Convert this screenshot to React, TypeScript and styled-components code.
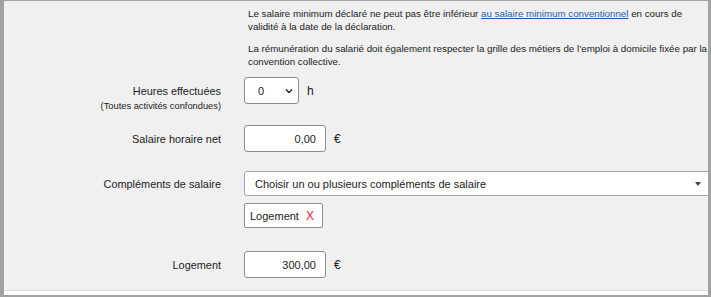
import styled, { createGlobalStyle } from 'styled-components';

const GlobalStyle = createGlobalStyle`
  html, body {
    margin: 0;
    padding: 0;
    background: #ffffff;
  }
  body {
    font-family: "Liberation Sans", Arial, sans-serif;
    color: #222222;
  }
`;

const Frame = styled.div`
  width: 711px;
  height: 297px;
  box-sizing: border-box;
  border-style: solid;
  border-color: #a2a2a2;
  border-width: 1px 3px 2px 4px;
  background: #ffffff;
  overflow: hidden;
`;

const Panel = styled.div`
  height: 290px;
  box-sizing: border-box;
  background: #f0f0f0;
  border-bottom: 1px solid #dadada;
  padding-top: 6px;
  overflow: hidden;
`;

const Row = styled.div<{ top?: number; align?: string }>`
  display: grid;
  grid-template-columns: 217px 1fr;
  column-gap: 23px;
  align-items: ${p => p.align || 'center'};
  margin-top: ${p => p.top || 0}px;
`;

const Notice = styled.div`
  padding-left: 4px;
  font-size: 9.75px;
  line-height: 13.3px;
  color: #222222;

  p {
    margin: 0 0 8px 0;
  }
  p:last-child {
    margin-bottom: 0;
  }
  a {
    color: #1f5fa6;
    text-decoration: underline;
  }
`;

const Label = styled.div<{ pad?: number }>`
  text-align: right;
  font-size: 10.9px;
  line-height: 14px;
  color: #222222;
  padding-top: ${p => p.pad || 0}px;
`;

const SubLabel = styled.div`
  font-size: 9.3px;
  line-height: 12px;
  margin-top: 2px;
`;

const Field = styled.div`
  display: flex;
  align-items: center;
  gap: 8px;
`;

const Unit = styled.span`
  font-size: 12px;
  color: #222222;
`;

const SmallSelect = styled.div`
  width: 55px;
  height: 27px;
  box-sizing: border-box;
  border: 1px solid #8e8e8e;
  border-radius: 3px;
  background: #ffffff;
  display: flex;
  align-items: center;
  justify-content: space-between;
  padding: 0 5px 0 13px;
  font-size: 11px;
`;

const AmountInput = styled.div`
  width: 82px;
  height: 27px;
  box-sizing: border-box;
  border: 1px solid #8e8e8e;
  border-radius: 3px;
  background: #ffffff;
  display: flex;
  align-items: center;
  justify-content: flex-end;
  padding-right: 9px;
  font-size: 11px;
`;

const WideSelect = styled.div`
  width: calc(100% + 14px);
  flex-shrink: 0;
  height: 25px;
  box-sizing: border-box;
  border: 1px solid #a8a8a8;
  border-radius: 3px;
  background: #ffffff;
  display: flex;
  align-items: center;
  justify-content: space-between;
  padding: 0 20px 0 10px;
  font-size: 11px;
`;

const Caret = styled.span`
  width: 0;
  height: 0;
  border-left: 3px solid transparent;
  border-right: 3px solid transparent;
  border-top: 4px solid #444444;
`;

const Tag = styled.div`
  width: 79px;
  height: 25px;
  box-sizing: border-box;
  border: 1px solid #8e8e8e;
  border-radius: 2px;
  background: #ffffff;
  display: flex;
  align-items: center;
  gap: 7px;
  padding-left: 5px;
  font-size: 11px;
`;

const Remove = styled.span`
  color: #e3262c;
  font-size: 12px;
`;

const Chevron = () => (
  <svg width="8" height="6" viewBox="0 0 8 6">
    <path d="M1 1.5 L4 4.5 L7 1.5" fill="none" stroke="#222" strokeWidth="1.4" />
  </svg>
);

export default function App() {
  return (
    <>
      <GlobalStyle />
      <Frame>
        <Panel>
          <Row>
            <div />
            <Notice>
              <p>
                Le salaire minimum déclaré ne peut pas être inférieur{' '}
                <a href="#">au salaire minimum conventionnel</a> en cours de validité à la date de la
                déclaration.
              </p>
              <p>
                La rémunération du salarié doit également respecter la grille des métiers de l’emploi à
                domicile fixée par la convention collective.
              </p>
            </Notice>
          </Row>

          <Row top={9} align="start">
            <Label pad={7}>
              Heures effectuées
              <SubLabel>(Toutes activités confondues)</SubLabel>
            </Label>
            <Field>
              <SmallSelect>
                <span>0</span>
                <Chevron />
              </SmallSelect>
              <Unit>h</Unit>
            </Field>
          </Row>

          <Row top={13}>
            <Label>Salaire horaire net</Label>
            <Field>
              <AmountInput>0,00</AmountInput>
              <Unit>€</Unit>
            </Field>
          </Row>

          <Row top={19}>
            <Label>Compléments de salaire</Label>
            <Field>
              <WideSelect>
                <span>Choisir un ou plusieurs compléments de salaire</span>
                <Caret />
              </WideSelect>
            </Field>
          </Row>

          <Row top={7}>
            <div />
            <Field>
              <Tag>
                Logement <Remove>X</Remove>
              </Tag>
            </Field>
          </Row>

          <Row top={23}>
            <Label>Logement</Label>
            <Field>
              <AmountInput>300,00</AmountInput>
              <Unit>€</Unit>
            </Field>
          </Row>
        </Panel>
      </Frame>
    </>
  );
}
